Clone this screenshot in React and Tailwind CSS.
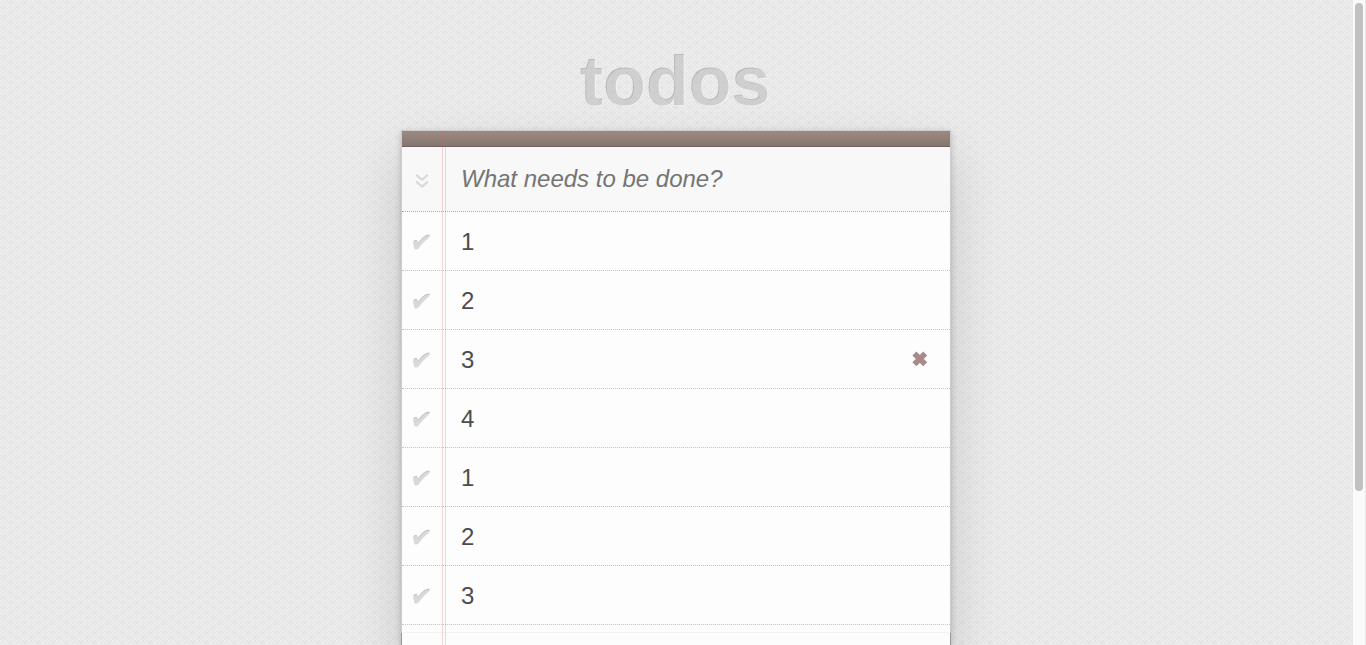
import React, { useState } from "react";

const INITIAL = ["1", "2", "3", "4", "1", "2", "3"].map((text, id) => ({ id, text, done: false }));

function ToggleAll({ onToggle }) {
  return (
    <button
      type="button"
      onClick={onToggle}
      aria-label="Mark all as complete"
      className="flex w-10 shrink-0 items-center justify-center text-[#d9d9d9]"
    >
      <svg width="14" height="16" viewBox="0 0 14 16" fill="none" stroke="currentColor" strokeWidth="2.2" className="mt-1">
        <path d="M1.2 1.8 L7 6.8 L12.8 1.8" />
        <path d="M1.2 8.6 L7 13.6 L12.8 8.6" />
      </svg>
    </button>
  );
}

function CheckIcon() {
  const shape =
    "M0.4 8.4 C0.3 6.8 2.8 5.7 3.8 6.7 C4.5 7.4 4.5 8.6 4.9 9.3 C7.4 6.2 10.4 2.7 13 1.6 C14 1.2 15.6 1.1 16.7 1.2 Q16.8 2.3 15.2 3.6 C11 7 8.2 10.2 5.6 13.9 Q4.2 15.5 1.8 14.8 C0.9 13.2 0.7 10.8 0.4 8.4 Z";
  return (
    <svg width="18" height="18" viewBox="0 0 18 18" fill="currentColor" className="overflow-visible">
      <path d={shape} fill="#bfbfbf" transform="translate(0 -0.4)" />
      <path d={shape} transform="translate(0 0.6)" />
    </svg>
  );
}

function RemoveIcon() {
  return (
    <svg width="16" height="16" viewBox="0 0 16 16" stroke="currentColor" strokeWidth="5.6">
      <path d="M2.4 2.4 L13.2 13.2 M13.2 2.4 L2.4 13.2" />
    </svg>
  );
}

function TodoItem({ item, onToggle, onRemove, showRemove }) {
  const inputId = `todo-${item.id}`;
  return (
    <li className="group flex h-[59px] items-center border-b border-dotted border-[#c4c4c4]">
      <span className="grid h-10 w-10 shrink-0 place-items-center pt-1">
        <input
          id={inputId}
          type="checkbox"
          checked={item.done}
          onChange={onToggle}
          className="peer col-start-1 row-start-1 h-full w-full appearance-none"
        />
        <span className="pointer-events-none col-start-1 row-start-1 text-[#d9d9d9] peer-checked:text-[#85ada7]">
          <CheckIcon />
        </span>
      </span>
      <label htmlFor={inputId} className="grow pt-0.5 pl-[19px] text-2xl leading-7 text-[#4d4d4d]">
        {item.text}
      </label>
      <button
        type="button"
        onClick={onRemove}
        aria-label={`Remove ${item.text}`}
        className={`mr-2.5 flex h-10 w-10 items-center justify-center text-[#a88a8a] group-hover:visible ${showRemove ? "visible" : "invisible"}`}
      >
        <RemoveIcon />
      </button>
    </li>
  );
}

export default function App() {
  const [items, setItems] = useState(INITIAL);
  const toggle = (id) => setItems(items.map((t) => (t.id === id ? { ...t, done: !t.done } : t)));
  const remove = (id) => setItems(items.filter((t) => t.id !== id));
  const toggleAll = () => {
    const done = !items.every((t) => t.done);
    setItems(items.map((t) => ({ ...t, done })));
  };

  return (
    <div className="flex h-screen overflow-hidden bg-[#eeeeee] font-['Liberation_Sans',Arial,sans-serif]">
      <main className="flex min-w-0 grow flex-col items-center bg-[conic-gradient(rgba(0,0,0,0.02)_25%,transparent_0_50%,rgba(0,0,0,0.02)_0_75%,transparent_0),conic-gradient(rgba(0,0,0,0.01)_25%,transparent_0_50%,rgba(0,0,0,0.01)_0_75%,transparent_0),radial-gradient(rgba(0,0,0,0.02)_1px,transparent_2px)] bg-[length:4px_4px,14px_10px,7px_5px]">
        <h1 className="mt-[42px] mb-2 text-[70px] leading-[80px] font-bold text-white/30 [text-shadow:-1px_-1px_rgba(0,0,0,0.2)]">
          todos
        </h1>
        <section className="relative flex w-full max-w-[550px] grow flex-col border border-b-0 border-[#ccc] bg-white/90 shadow-[0_2px_6px_0_rgba(0,0,0,0.2),0_25px_50px_0_rgba(0,0,0,0.15)]">
          <div className="pointer-events-none absolute inset-y-0 left-10 z-10 w-1 border-x border-[rgba(220,90,90,0.25)]" />
          <div className="h-4 border-b border-[#6c615c] bg-linear-to-b from-[#9d8b83] to-[#84766f]" />
          <div className="flex h-16 bg-[#f8f8f8]">
            <ToggleAll onToggle={toggleAll} />
            <input
              type="text"
              aria-label="New todo"
              placeholder="What needs to be done?"
              className="min-w-0 grow bg-transparent px-[19px] text-2xl text-[#4d4d4d] outline-none placeholder:text-[#757575] placeholder:italic"
            />
          </div>
          <ul className="border-t border-dotted border-[#adadad]">
            {items.map((item, i) => (
              <TodoItem
                key={item.id}
                item={item}
                showRemove={i === 2}
                onToggle={() => toggle(item.id)}
                onRemove={() => remove(item.id)}
              />
            ))}
          </ul>
          <div className="-mx-px mt-[7px] grow border-x border-t border-x-[#999] border-t-[#f3f3f3] bg-[#fcfcfc]" />
        </section>
      </main>
      <div className="flex w-[14px] shrink-0 justify-center border-x border-[#e8e8e8] bg-[#fafafa] pt-[3px]">
        <div className="h-[76%] w-2 rounded-full bg-[#c1c1c1]" />
      </div>
    </div>
  );
}
